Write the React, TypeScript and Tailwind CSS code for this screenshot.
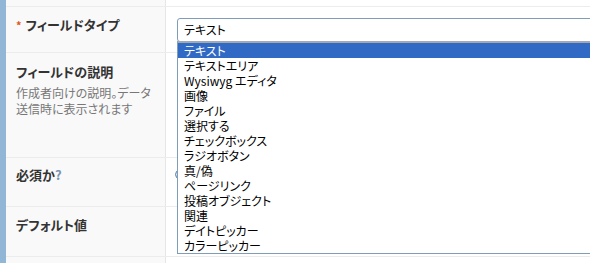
import React from "react";

const options = [
  "テキスト",
  "テキストエリア",
  "Wysiwyg エディタ",
  "画像",
  "ファイル",
  "選択する",
  "チェックボックス",
  "ラジオボタン",
  "真/偽",
  "ページリンク",
  "投稿オブジェクト",
  "関連",
  "デイトピッカー",
  "カラーピッカー",
];

export default function App() {
  return (
    <div
      className="relative flex h-[263px] w-[590px] overflow-hidden bg-white text-[#333] [font-feature-settings:'palt']"
      style={{ fontFamily: '"Noto Sans CJK JP", "Liberation Sans", sans-serif' }}
    >
      <div className="w-[6px] shrink-0 bg-[#92b6d5]" />
      <div className="flex flex-1 flex-col">
        <div className="flex h-[7px] shrink-0 border-b border-[#ececec]">
          <div className="w-[160px] border-r border-[#e6e6e6] bg-[#f9f9f9]" />
          <div className="flex-1" />
        </div>
        <div className="flex h-[46px] shrink-0 border-b border-[#ececec]">
          <div className="w-[160px] border-r border-[#e6e6e6] bg-[#f9f9f9] pl-[10px] pt-[9px]">
            <div className="flex items-center text-[13px] font-bold leading-[18px]">
              <span className="mr-[4px] text-[11px] text-[#e0561e]">*</span>
              フィールドタイプ
            </div>
          </div>
          <div className="relative flex-1 pl-[11px] pt-[11px]">
            <div className="relative z-10 h-[24px] w-[440px] rounded-[3px] border border-[#7f9db9] bg-white pl-[6px] text-[12px] leading-[22px] text-black">
              テキスト
            </div>
            <div className="absolute left-[11px] top-[34px] z-20 w-[440px] border border-t-2 border-[#7f9db9] border-t-[#a2a9b0] bg-white">
              {options.map((o, i) => (
                <div
                  key={o}
                  className={
                    "h-[15px] pl-[6px] text-[12px] leading-[15px] " +
                    (i === 0 ? "bg-[#316ac5] text-white" : "text-black")
                  }
                >
                  {o}
                </div>
              ))}
            </div>
          </div>
        </div>
        <div className="flex h-[105px] shrink-0 border-b border-[#ececec]">
          <div className="w-[160px] border-r border-[#e6e6e6] bg-[#f9f9f9] pl-[10px] pt-[10px]">
            <div className="text-[13px] font-bold leading-[18px]">フィールドの説明</div>
            <div className="mt-[4px] text-[12px] leading-[16px] text-[#777]">
              作成者向けの説明。データ
              <br />
              送信時に表示されます
            </div>
          </div>
          <div className="flex-1" />
        </div>
        <div className="flex h-[49px] shrink-0 border-b border-[#ececec]">
          <div className="w-[160px] border-r border-[#e6e6e6] bg-[#f9f9f9] pl-[10px] pt-[8px]">
            <div className="text-[13px] font-bold leading-[18px]">
              必須か<span className="text-[#7a93b0]">?</span>
            </div>
          </div>
          <div className="flex-1 pl-[9px] pt-[12px]">
            <div className="h-[9px] w-[9px] rounded-full border border-[#5c7fa6] bg-[#dbe6f2]" />
          </div>
        </div>
        <div className="flex h-[50px] shrink-0 border-b border-[#ececec]">
          <div className="w-[160px] border-r border-[#e6e6e6] bg-[#f9f9f9] pl-[10px] pt-[9px]">
            <div className="text-[13px] font-bold leading-[18px]">デフォルト値</div>
          </div>
          <div className="flex-1" />
        </div>
        <div className="flex flex-1">
          <div className="w-[160px] border-r border-[#e6e6e6] bg-[#f9f9f9]" />
          <div className="flex-1" />
        </div>
      </div>
    </div>
  );
}
